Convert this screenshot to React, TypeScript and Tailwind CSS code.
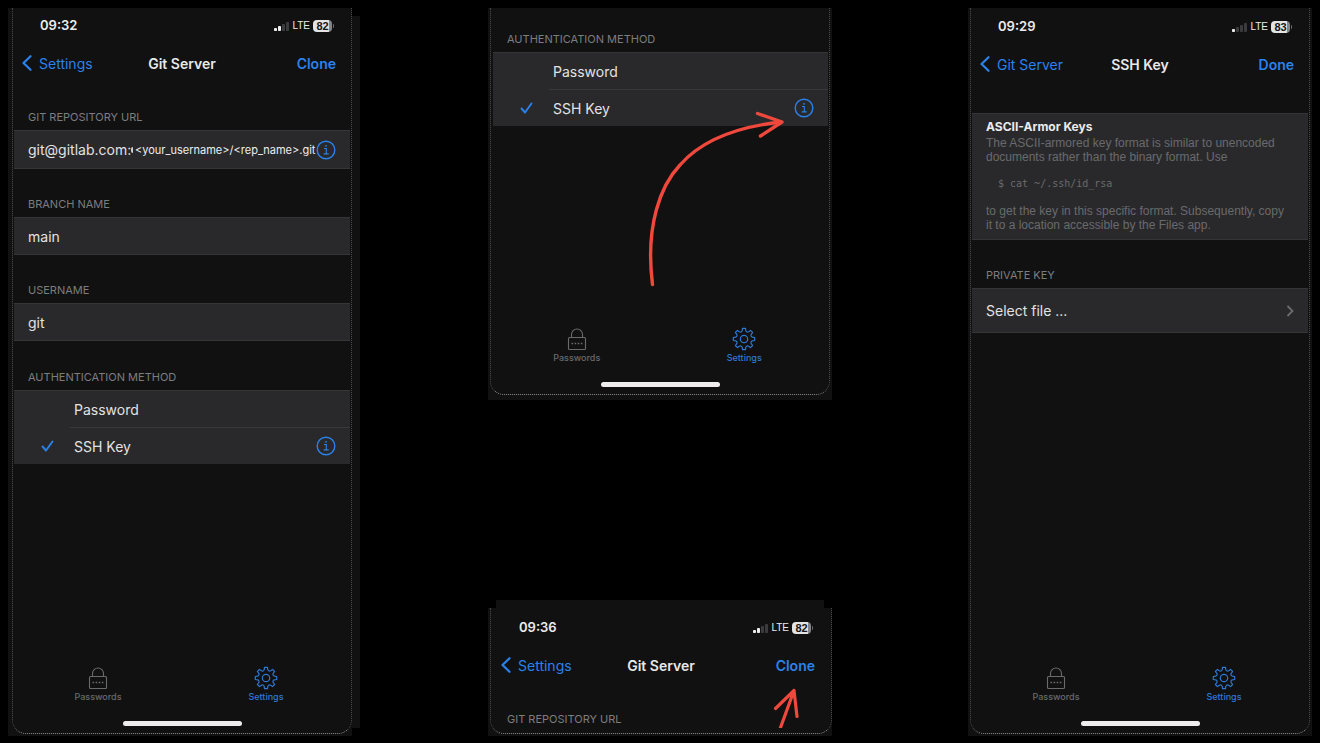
import type { ReactNode } from "react";

const GEAR = (() => {
  const at = (deg: number, r: number) => {
    const a = (deg * Math.PI) / 180;
    return (12 + r * Math.sin(a)).toFixed(2) + " " + (12 - r * Math.cos(a)).toFixed(2);
  };
  let d = "M" + at(-8, 10.8);
  for (let i = 0; i < 8; i++) {
    const c = i * 45;
    d += " L" + at(c - 8, 10.8) + " L" + at(c + 8, 10.8) + " L" + at(c + 12, 8.6) + " Q" + at(c + 22.5, 6.8) + " " + at(c + 33, 8.6);
  }
  return d + " Z";
})();

function GearIcon() {
  return (
    <svg className="size-6" viewBox="0 0 24 24" fill="none" stroke="currentColor" strokeWidth="1.2" strokeLinejoin="round" aria-hidden="true">
      <path d={GEAR} />
      <circle cx="12" cy="12" r="3.7" />
    </svg>
  );
}

function LockIcon() {
  return (
    <svg className="size-6" viewBox="0 0 24 24" fill="none" stroke="currentColor" strokeWidth="1.1" aria-hidden="true">
      <rect x="3.5" y="10.5" width="17" height="12" rx="1" />
      <path d="M6.5 10.5V7.5a5.5 5.5 0 0 1 11 0v3" />
      <path d="M6.5 16.5h11" strokeWidth="1.6" strokeDasharray="1.6 1.5" />
    </svg>
  );
}

function InfoIcon() {
  return (
    <svg className="size-5" viewBox="0 0 20 20" fill="none" stroke="currentColor" strokeWidth="1.4" aria-hidden="true">
      <circle cx="10" cy="10" r="8.8" />
      <path d="M8 8.5h2.3v5.3M7.7 13.9h5" strokeWidth="1.1" />
      <circle cx="10" cy="5.8" r="0.9" fill="currentColor" stroke="none" />
    </svg>
  );
}

function StatusBar({ time, bars, battery }: { time: string; bars: number; battery: number }) {
  return (
    <div className="flex h-[35px] items-center justify-between pr-4 pl-[26px]">
      <span className="text-[13px] font-semibold text-[#ececec]">{time}</span>
      <div className="flex items-center gap-[3px] font-['Liberation_Sans',sans-serif]">
        <svg className="h-2.5 w-[15px]" viewBox="0 0 15 10" aria-hidden="true">
          {[0, 1, 2, 3].map((i) => (
            <rect key={i} x={i * 4} y={7 - i * 2} width="3" height={3 + i * 2} rx="0.8" fill={i < bars ? "#ececec" : "#3b3b3d"} />
          ))}
        </svg>
        <span className="text-[10px] leading-3 text-[#ececec]">LTE</span>
        <span className="flex items-center gap-px">
          <span className="flex h-3 w-[19px] items-center justify-center rounded-[4px] bg-linear-to-r from-[#e4e4e4] from-82% to-[#858587] to-82% text-[11px] leading-3 font-bold text-[#161616]">
            {battery}
          </span>
          <span className="h-1 w-px rounded-r bg-[#6b6b6d]" />
        </span>
      </div>
    </div>
  );
}

function NavBar({ back, title, action }: { back: string; title: string; action: string }) {
  return (
    <header className="grid h-10 grid-cols-[1fr_auto_1fr] items-center text-[14px]">
      <button className="flex items-center gap-1.5 justify-self-start pl-2 text-[#2a82ec]">
        <svg className="h-4 w-[11px]" viewBox="0 0 11 16" fill="none" stroke="currentColor" strokeWidth="2.2" strokeLinecap="round" strokeLinejoin="round" aria-hidden="true">
          <path d="M8.500 1.200 1.500 8l7 6.800" />
        </svg>
        {back}
      </button>
      <h1 className="font-semibold text-[#e8e8e8]">{title}</h1>
      <button className="justify-self-end pr-3.5 font-semibold text-[#2a82ec]">{action}</button>
    </header>
  );
}

function TabBar() {
  return (
    <footer className="mt-auto">
      <nav className="grid grid-cols-2 text-[9px] leading-[10px] font-medium">
        <a href="#passwords" className="flex flex-col items-center gap-0.5 text-[#6a6a6a]">
          <LockIcon />
          Passwords
        </a>
        <a href="#settings" className="flex flex-col items-center gap-0.5 text-[#2f78d4]">
          <GearIcon />
          Settings
        </a>
      </nav>
      <div className="mx-auto mt-[19px] mb-[7px] h-[5px] w-[119px] rounded-full bg-[#eeecec]" />
    </footer>
  );
}

const heading = "pb-[5px] pl-3.5 text-[11px] leading-4 text-[#7d7d7f]";
const band = "border-y border-[#353537] bg-[#29292b]";

function Field({ id, label, value }: { id: string; label: string; value: string }) {
  return (
    <div className="pt-[27px]">
      <label htmlFor={id} className={"block " + heading}>
        {label}
      </label>
      <input id={id} defaultValue={value} className={"block h-[38px] w-full px-3.5 text-[14px] text-[#e2e2e2] outline-none " + band} />
    </div>
  );
}

function AuthMethod({ name }: { name: string }) {
  return (
    <fieldset>
      <legend className={heading}>AUTHENTICATION METHOD</legend>
      <div className="border-t border-[#353537] bg-[#29292b] text-[14px] text-[#e2e2e2]">
        <Option name={name} label="Password" />
        <div className="ml-14 h-px bg-[#38383a]" />
        <div className="flex items-center pr-3.5">
          <Option name={name} label="SSH Key" checked />
          <button aria-label="SSH Key details" className="text-[#2a82ec]">
            <InfoIcon />
          </button>
        </div>
      </div>
    </fieldset>
  );
}

function Option({ name, label, checked }: { name: string; label: string; checked?: boolean }) {
  return (
    <label className="relative flex h-9 flex-1 items-center gap-5 pl-[27px]">
      <input type="radio" name={name} defaultChecked={checked} className="peer sr-only" />
      <svg className="invisible h-3 w-[13px] text-[#2a82ec] peer-checked:visible" viewBox="0 0 13 12" fill="none" stroke="currentColor" strokeWidth="1.9" strokeLinecap="round" strokeLinejoin="round" aria-hidden="true">
        <path d="M1.5 6.5 5 10.5 11.5 1.5" />
      </svg>
      {label}
    </label>
  );
}

function Screen({ className, children }: { className: string; children: ReactNode }) {
  return (
    <div className={"flex flex-1 flex-col border-x border-b border-dotted border-x-[#4c4c4c] border-b-[#8c8c8c] " + className}>{children}</div>
  );
}

export default function App() {
  return (
    <main className="grid min-h-screen grid-cols-[352fr_352fr_344fr] gap-x-32 bg-black px-2 pt-2 pb-[7px] font-['Inter',sans-serif]">
      <section className="flex">
        <div className="flex flex-1 flex-col bg-[#111111] pb-0.5 pl-1">
          <Screen className="rounded-b-[14px] px-px">
            <StatusBar time="09:32" bars={2} battery={82} />
            <NavBar back="Settings" title="Git Server" action="Clone" />
            <div className="pt-[26px]">
              <label htmlFor="repo" className={"block " + heading}>
                GIT REPOSITORY URL
              </label>
              <div className={"flex h-[39px] items-center pr-3.5 pl-3.5 " + band}>
                <input id="repo" defaultValue="git@gitlab.com:" className="w-[103px] bg-transparent text-[14px] text-[#e2e2e2] outline-none" />
                <span className="mr-0.5 h-1.5 w-0.5 rounded-l-full bg-[#d0d0d0]" />
                <input
                  aria-label="Repository path"
                  defaultValue="<your_username>/<rep_name>.git"
                  className="min-w-0 flex-1 bg-transparent pt-0.5 text-[11px] text-[#eeeeee] outline-none"
                />
                <button aria-label="Repository URL details" className="text-[#2a82ec]">
                  <InfoIcon />
                </button>
              </div>
            </div>
            <Field id="branch" label="BRANCH NAME" value="main" />
            <Field id="user" label="USERNAME" value="git" />
            <div className="pt-7">
              <AuthMethod name="auth-main" />
            </div>
            <TabBar />
          </Screen>
        </div>
        <div className="my-2 w-2 bg-[#111111]" />
      </section>

      <section className="flex flex-col justify-between pr-2">
        <div className="relative flex h-[392px] flex-col bg-[#111111] pr-0.5 pb-[5px] pl-0.5">
          <Screen className="rounded-b-[14px] pt-[23px] pr-px pl-0.5">
            <AuthMethod name="auth-zoom" />
            <TabBar />
          </Screen>
          <svg className="absolute top-[100px] right-[45px] h-[182px] w-[142px]" viewBox="645 108 142 182" fill="none" stroke="#f0483c" strokeWidth="3.4" strokeLinecap="round" strokeLinejoin="round" aria-hidden="true">
            <path d="M652.5 284.5C645 225 661 185 680 165C700 142 735 127 781 122" />
            <path d="M757.5 113.5 782 122 760.5 136" />
          </svg>
        </div>
        <div className="flex flex-col">
          <div className="mx-2 h-2 bg-[#111111]" />
          <div className="relative flex flex-col bg-[#111111] pb-0.5 pl-0.5">
            <Screen className="rounded-b-[14px] pt-0.5 pr-0.5 pb-px pl-0.5">
              <StatusBar time="09:36" bars={2} battery={82} />
              <NavBar back="Settings" title="Git Server" action="Clone" />
              <h2 className={"pt-[26px] " + heading}>GIT REPOSITORY URL</h2>
            </Screen>
            <svg className="absolute right-[30px] bottom-2 h-11 w-[30px]" viewBox="772 684 30 44" fill="none" stroke="#f0483c" strokeWidth="3.2" strokeLinecap="round" strokeLinejoin="round" aria-hidden="true">
              <path d="M780 729 794 690.5M775.500 708.500 794 690.500 797 716.500" />
            </svg>
          </div>
        </div>
      </section>

      <section className="flex flex-col bg-[#111111] pr-0.5 pb-0.5 pl-0.5">
        <Screen className="rounded-b-[14px] pt-px pr-px pl-px">
          <StatusBar time="09:29" bars={1} battery={83} />
          <NavBar back="Git Server" title="SSH Key" action="Done" />
          <article className={"mt-[29px] pt-1.5 pr-4 pb-[7px] pl-3.5 font-['Liberation_Sans',sans-serif] text-[12px] leading-[14px] text-[#6a6a6c] " + band}>
            <h2 className="pb-0.5 font-['Inter',sans-serif] font-bold text-[#ececec]">ASCII-Armor Keys</h2>
            <p>The ASCII-armored key format is similar to unencoded documents rather than the binary format. Use</p>
            <pre className="py-[13px] pl-3 font-['DejaVu_Sans_Mono',monospace] text-[10px] leading-[14px]">$ cat ~/.ssh/id_rsa</pre>
            <p>to get the key in this specific format. Subsequently, copy it to a location accessible by the Files app.</p>
          </article>
          <h2 className={"pt-[27px] " + heading}>PRIVATE KEY</h2>
          <button className={"flex h-[45px] items-center justify-between pr-3.5 pl-3.5 text-[14px] text-[#e2e2e2] " + band}>
            Select file ...
            <svg className="h-3 w-2" viewBox="0 0 8 12" fill="none" stroke="#6c6c6e" strokeWidth="1.8" aria-hidden="true">
              <path d="M1.500 1 6.500 6 1.500 11" />
            </svg>
          </button>
          <TabBar />
        </Screen>
      </section>
    </main>
  );
}
